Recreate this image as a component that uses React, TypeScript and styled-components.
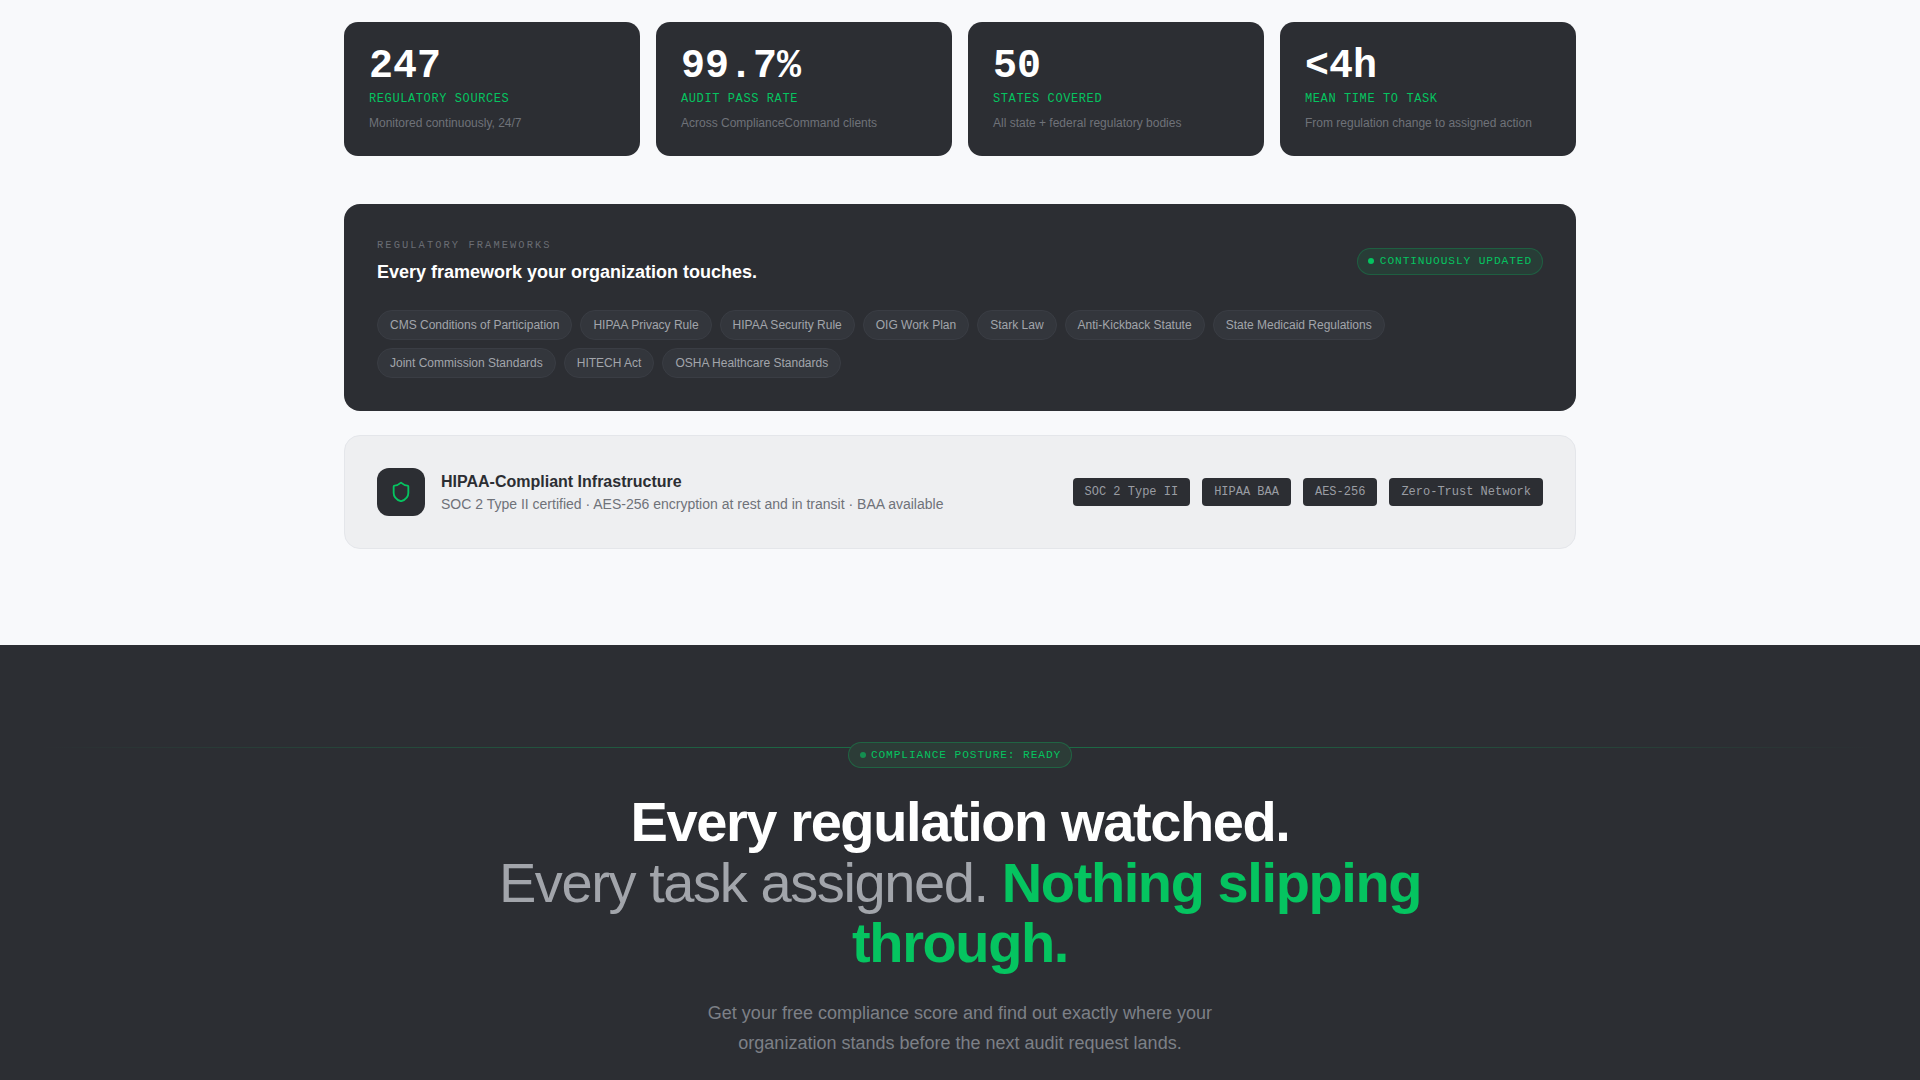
import styled, { createGlobalStyle } from 'styled-components';

const stats = [
  { value: '247', label: 'Regulatory Sources', note: 'Monitored continuously, 24/7' },
  { value: '99.7%', label: 'Audit Pass Rate', note: 'Across ComplianceCommand clients' },
  { value: '50', label: 'States Covered', note: 'All state + federal regulatory bodies' },
  { value: '<4h', label: 'Mean Time to Task', note: 'From regulation change to assigned action' },
];

const frameworks = [
  'CMS Conditions of Participation',
  'HIPAA Privacy Rule',
  'HIPAA Security Rule',
  'OIG Work Plan',
  'Stark Law',
  'Anti-Kickback Statute',
  'State Medicaid Regulations',
  'Joint Commission Standards',
  'HITECH Act',
  'OSHA Healthcare Standards',
];

const certs = ['SOC 2 Type II', 'HIPAA BAA', 'AES-256', 'Zero-Trust Network'];

const GlobalStyle = createGlobalStyle`
  html, body {
    margin: 0;
    height: 1080px;
    overflow: hidden;
    background: #f8f9fb;
    font-family: "Liberation Sans", Arial, sans-serif;
  }
  * {
    box-sizing: border-box;
  }
`;

const mono = `"Liberation Mono", "Courier New", monospace`;
const ink = '#2c2e33';
const green = '#05c460';

const TopSection = styled.section`
  width: 1232px;
  margin: 0 auto;
  padding: 22px 0 96px;
`;

const StatGrid = styled.div`
  display: grid;
  grid-template-columns: repeat(4, 1fr);
  gap: 16px;
  margin-bottom: 48px;
`;

const StatCard = styled.div`
  background: ${ink};
  border-radius: 14px;
  padding: 25px 25px 0;
  height: 134px;
`;

const StatValue = styled.div`
  font-family: ${mono};
  font-size: 40px;
  font-weight: 700;
  line-height: 40px;
  color: #ffffff;
`;

const StatLabel = styled.div`
  font-family: ${mono};
  font-size: 12px;
  line-height: 14px;
  letter-spacing: 0.05em;
  text-transform: uppercase;
  color: ${green};
  margin-top: 5px;
`;

const StatNote = styled.div`
  font-size: 12px;
  line-height: 16px;
  color: #6f7279;
  margin-top: 9px;
`;

const FrameworkPanel = styled.div`
  background: ${ink};
  border-radius: 16px;
  padding: 35px 33px 0;
  height: 207px;
  margin-bottom: 24px;
`;

const FrameworkHead = styled.div`
  display: flex;
  align-items: center;
  justify-content: space-between;
  margin-bottom: 26px;
`;

const Eyebrow = styled.div`
  font-family: ${mono};
  font-size: 10.4px;
  line-height: 12px;
  letter-spacing: 0.2em;
  text-transform: uppercase;
  color: #6a6d74;
  margin-bottom: 9px;
`;

const PanelTitle = styled.h3`
  margin: 0;
  font-size: 18px;
  line-height: 24px;
  font-weight: 700;
  color: #ffffff;
`;

const UpdatedBadge = styled.div`
  display: flex;
  align-items: center;
  gap: 6px;
  height: 27px;
  margin-top: -1px;
  padding: 0 10px;
  border: 1px solid rgba(5, 196, 96, 0.25);
  border-radius: 14px;
  background: rgba(5, 196, 96, 0.1);
  font-family: ${mono};
  font-size: 11.2px;
  letter-spacing: 0.08em;
  text-transform: uppercase;
  color: ${green};
`;

const Dot = styled.span`
  width: 6px;
  height: 6px;
  border-radius: 50%;
  background: ${green};
`;

const ChipWrap = styled.div`
  display: flex;
  flex-wrap: wrap;
  gap: 8px;
`;

const Chip = styled.span`
  display: flex;
  align-items: center;
  height: 30px;
  padding: 0 12px;
  border: 1px solid #3a3d44;
  border-radius: 15px;
  background: #33363c;
  font-size: 12px;
  color: #a2a5ab;
`;

const InfraPanel = styled.div`
  display: flex;
  align-items: center;
  justify-content: space-between;
  height: 114px;
  padding: 0 32px;
  background: #eeeff1;
  border: 1px solid #e4e6ea;
  border-radius: 16px;
`;

const InfraLeft = styled.div`
  display: flex;
  align-items: center;
  gap: 16px;
`;

const ShieldBox = styled.div`
  display: flex;
  align-items: center;
  justify-content: center;
  width: 48px;
  height: 48px;
  border-radius: 12px;
  background: ${ink};
`;

const InfraCopy = styled.div`
  padding-top: 2px;
`;

const InfraTitle = styled.div`
  font-size: 16px;
  line-height: 22px;
  font-weight: 700;
  color: ${ink};
`;

const InfraText = styled.div`
  font-size: 14px;
  line-height: 22px;
  color: #6f7279;
`;

const CertRow = styled.div`
  display: flex;
  gap: 12px;
`;

const CertTag = styled.span`
  display: flex;
  align-items: center;
  height: 28px;
  padding: 0 12px;
  border-radius: 4px;
  background: ${ink};
  font-family: ${mono};
  font-size: 12px;
  color: #9a9da3;
`;

const CtaSection = styled.section`
  background: ${ink};
  padding: 97px 0 96px;
  text-align: center;
`;

const PostureRow = styled.div`
  position: relative;
  display: flex;
  justify-content: center;
  margin-bottom: 24px;

  &::before {
    content: '';
    position: absolute;
    top: 5px;
    left: 0;
    right: 0;
    height: 1px;
    background: linear-gradient(90deg, transparent 2%, rgba(5, 196, 96, 0.46) 50%, transparent 98%);
  }
`;

const PosturePill = styled.div`
  position: relative;
  display: flex;
  align-items: center;
  gap: 5px;
  height: 26px;
  padding: 0 10px 0 11px;
  border: 1px solid rgba(5, 196, 96, 0.3);
  border-radius: 13px;
  background: #2c3c37;
  font-family: ${mono};
  font-size: 11.2px;
  letter-spacing: 0.08em;
  text-transform: uppercase;
  color: ${green};
`;

const FadedDot = styled(Dot)`
  opacity: 0.6;
`;

const Headline = styled.h2`
  width: 1000px;
  margin: 0 auto 24.8px;
  padding-top: 0.2px;
  font-size: 56px;
  line-height: 1.08;
  font-weight: 700;
  letter-spacing: -0.025em;
  color: #ffffff;
`;

const HeadlineMuted = styled.span`
  font-weight: 400;
  color: #a2a5ab;
`;

const HeadlineGreen = styled.span`
  color: ${green};
`;

const Subhead = styled.p`
  width: 540px;
  margin: 0 auto;
  font-size: 18px;
  line-height: 30px;
  color: #7d8087;
`;

const App = () => {
  return (
    <>
      <GlobalStyle />
      <TopSection>
        <StatGrid>
          {stats.map((stat) => (
            <StatCard key={stat.label}>
              <StatValue>{stat.value}</StatValue>
              <StatLabel>{stat.label}</StatLabel>
              <StatNote>{stat.note}</StatNote>
            </StatCard>
          ))}
        </StatGrid>

        <FrameworkPanel>
          <FrameworkHead>
            <div>
              <Eyebrow>Regulatory Frameworks</Eyebrow>
              <PanelTitle>Every framework your organization touches.</PanelTitle>
            </div>
            <UpdatedBadge>
              <Dot />
              Continuously Updated
            </UpdatedBadge>
          </FrameworkHead>
          <ChipWrap>
            {frameworks.map((name) => (
              <Chip key={name}>{name}</Chip>
            ))}
          </ChipWrap>
        </FrameworkPanel>

        <InfraPanel>
          <InfraLeft>
            <ShieldBox>
              <svg width="22" height="22" viewBox="0 0 24 24" fill="none" stroke={green} strokeWidth="2" strokeLinecap="round" strokeLinejoin="round">
                <path d="M20 13c0 5-3.5 7.5-7.66 8.95a1 1 0 0 1-.67-.01C7.5 20.5 4 18 4 13V6a1 1 0 0 1 1-1c2 0 4.5-1.2 6.24-2.72a1.17 1.17 0 0 1 1.52 0C14.51 3.81 17 5 19 5a1 1 0 0 1 1 1z" />
              </svg>
            </ShieldBox>
            <InfraCopy>
              <InfraTitle>HIPAA-Compliant Infrastructure</InfraTitle>
              <InfraText>SOC 2 Type II certified · AES-256 encryption at rest and in transit · BAA available</InfraText>
            </InfraCopy>
          </InfraLeft>
          <CertRow>
            {certs.map((cert) => (
              <CertTag key={cert}>{cert}</CertTag>
            ))}
          </CertRow>
        </InfraPanel>
      </TopSection>

      <CtaSection>
        <PostureRow>
          <PosturePill>
            <FadedDot />
            Compliance Posture: Ready
          </PosturePill>
        </PostureRow>
        <Headline>
          Every regulation watched.
          <br />
          <HeadlineMuted>Every task assigned.</HeadlineMuted> <HeadlineGreen>Nothing slipping through.</HeadlineGreen>
        </Headline>
        <Subhead>
          Get your free compliance score and find out exactly where your organization stands before the next audit request lands.
        </Subhead>
      </CtaSection>
    </>
  );
};

export default App;
